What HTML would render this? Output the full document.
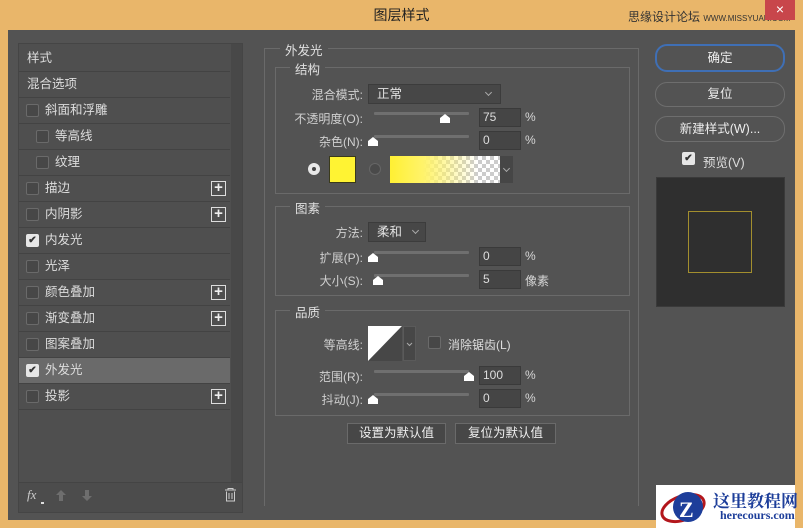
<!DOCTYPE html>
<html><head><meta charset="utf-8">
<style>
*{margin:0;padding:0;box-sizing:border-box}
body{width:803px;height:528px;background:#e9b66a;position:relative;overflow:hidden;font-family:"Liberation Sans","Noto Sans CJK SC",sans-serif;font-size:12px;color:#d6d6d6}
.a{position:absolute}
.win{left:8px;top:30px;width:787px;height:490px;background:#535353}
.title{left:0;top:0;width:803px;height:30px;text-align:center;line-height:30px;font-size:14px;color:#222}
.close{left:765px;top:0;width:30px;height:20px;background:#c8464b;color:#fff;text-align:center;line-height:18px;font-size:14px}
.lp{left:18px;top:43px;width:225px;height:470px;border:1px solid #454545;background:#4f4f4f}
.row{position:absolute;left:19px;width:211px;height:26px;border-bottom:1px solid #434343;line-height:25px;color:#ddd;font-size:12.5px}
.cb{position:absolute;width:13px;height:13px;border:1px solid #6a6a6a;background:#474747;border-radius:2px}
.cbk{background:#e6e6e6;border-color:#e6e6e6;color:#333;font-size:10px;line-height:11px;text-align:center;font-weight:bold}
.plus{position:absolute;left:192px;top:5px;width:15px;height:15px;border:1px solid #ddd;color:#eee;text-align:center;line-height:12px;font-size:15px;font-weight:bold}
.grp{position:absolute;border:1px solid #6a6a6a}
.lg{position:absolute;background:#535353;padding:0 5px;font-size:12.5px;color:#e0e0e0}
.lbl{position:absolute;text-align:right;width:120px;color:#d0d0d0;font-size:12px}
.inp{position:absolute;width:42px;height:19px;background:#454545;border:1px solid #3a3a3a;color:#ddd;padding-left:3px;line-height:17px;font-size:12px}
.trk{position:absolute;height:3px;background:#6f6f6f;width:95px;border-radius:1px}
.th{position:absolute;width:0;height:0}
.th:before{content:"";position:absolute;left:-5px;top:0;border-left:5px solid transparent;border-right:5px solid transparent;border-bottom:4px solid #fff}
.th:after{content:"";position:absolute;left:-5px;top:4px;width:10px;height:5px;background:#fff}
.sel{position:absolute;height:20px;background:#474747;border:1px solid #3c3c3c;color:#e0e0e0;padding-left:8px;line-height:18px;font-size:12.5px}
.chev{position:absolute;width:5px;height:5px;border-right:1px solid #aaa;border-bottom:1px solid #aaa;transform:rotate(45deg)}
.btn{position:absolute;border:1px solid #6e6e6e;border-radius:12px;text-align:center;color:#eee;font-size:12.5px}
.pb{position:absolute;height:21px;background:#474747;border:1px solid #6a6a6a;color:#eee;text-align:center;line-height:19px;font-size:12.5px}
</style></head><body>
<div class="a title">图层样式</div>
<div class="a" style="left:628px;top:8px;font-size:12px;color:#333;white-space:nowrap">思缘设计论坛 <span style="font-size:8px">WWW.MISSYUAN.COM</span></div>
<div class="a close">×</div>
<div class="a win"></div>

<div class="a lp"></div>
<div class="a" style="left:231px;top:44px;width:11px;height:438px;background:#484848"></div>
<div class="row" style="top:46px;padding-left:8px">样式</div>
<div class="row" style="top:72px;padding-left:8px">混合选项</div>
<div class="row" style="top:98px"><span class="cb" style="left:7px;top:6px"></span><span style="position:absolute;left:26px">斜面和浮雕</span></div>
<div class="row" style="top:124px"><span class="cb" style="left:17px;top:6px"></span><span style="position:absolute;left:36px">等高线</span></div>
<div class="row" style="top:150px"><span class="cb" style="left:17px;top:6px"></span><span style="position:absolute;left:36px">纹理</span></div>
<div class="row" style="top:176px"><span class="cb" style="left:7px;top:6px"></span><span style="position:absolute;left:26px">描边</span><span class="plus">+</span></div>
<div class="row" style="top:202px"><span class="cb" style="left:7px;top:6px"></span><span style="position:absolute;left:26px">内阴影</span><span class="plus">+</span></div>
<div class="row" style="top:228px"><span class="cb cbk" style="left:7px;top:6px">✔</span><span style="position:absolute;left:26px">内发光</span></div>
<div class="row" style="top:254px"><span class="cb" style="left:7px;top:6px"></span><span style="position:absolute;left:26px">光泽</span></div>
<div class="row" style="top:280px"><span class="cb" style="left:7px;top:6px"></span><span style="position:absolute;left:26px">颜色叠加</span><span class="plus">+</span></div>
<div class="row" style="top:306px"><span class="cb" style="left:7px;top:6px"></span><span style="position:absolute;left:26px">渐变叠加</span><span class="plus">+</span></div>
<div class="row" style="top:332px"><span class="cb" style="left:7px;top:6px"></span><span style="position:absolute;left:26px">图案叠加</span></div>
<div class="row" style="top:358px;background:#6a6a6a"><span class="cb cbk" style="left:7px;top:6px">✔</span><span style="position:absolute;left:26px">外发光</span></div>
<div class="row" style="top:384px"><span class="cb" style="left:7px;top:6px"></span><span style="position:absolute;left:26px">投影</span><span class="plus">+</span></div>
<div class="a" style="left:19px;top:482px;width:223px;height:30px;background:#4c4c4c;border-top:1px solid #444"></div>
<div class="a" style="left:27px;top:487px;font-style:italic;color:#ccc;font-size:13px;font-family:'Liberation Serif',serif">fx</div>
<div class="a" style="left:41px;top:502px;width:3px;height:2px;background:#ddd"></div>
<svg class="a" style="left:55px;top:490px" width="12" height="12"><path d="M6 0L11 5H8V11H4V5H1Z" fill="#6e6e6e"/></svg>
<svg class="a" style="left:81px;top:490px" width="12" height="12"><path d="M6 11L11 6H8V0H4V6H1Z" fill="#6e6e6e"/></svg>
<svg class="a" style="left:224px;top:488px" width="13" height="14"><path d="M1 2h11M4 2V0.5h5V2M2.5 3.5v9.5h8V3.5M5 5v6M8 5v6" stroke="#ccc" fill="none"/></svg>

<!-- center -->
<div class="grp" style="left:264px;top:48px;width:375px;height:458px;border-bottom:none"></div>
<div class="lg" style="left:280px;top:40px">外发光</div>
<div class="grp" style="left:275px;top:67px;width:355px;height:127px"></div>
<div class="lg" style="left:290px;top:59px">结构</div>
<div class="lbl" style="left:243px;top:86px">混合模式:</div>
<div class="sel" style="left:368px;top:84px;width:133px">正常<span class="chev" style="left:117px;top:5px"></span></div>
<div class="lbl" style="left:243px;top:110px">不透明度(O):</div>
<div class="trk" style="left:374px;top:112px"></div><div class="th" style="left:445px;top:114px"></div>
<div class="inp" style="left:479px;top:108px">75</div><div class="a" style="left:525px;top:110px">%</div>
<div class="lbl" style="left:243px;top:133px">杂色(N):</div>
<div class="trk" style="left:374px;top:135px"></div><div class="th" style="left:373px;top:137px"></div>
<div class="inp" style="left:479px;top:131px">0</div><div class="a" style="left:525px;top:133px">%</div>
<div class="a" style="left:308px;top:163px;width:12px;height:12px;border-radius:50%;background:#e8e8e8"></div>
<div class="a" style="left:312px;top:167px;width:4px;height:4px;border-radius:50%;background:#444"></div>
<div class="a" style="left:329px;top:156px;width:27px;height:27px;background:#fff333;border:1px solid #3a3a1a"></div>
<div class="a" style="left:369px;top:163px;width:12px;height:12px;border-radius:50%;border:1px solid #666;background:#4a4a4a"></div>
<div class="a" style="left:390px;top:156px;width:110px;height:27px;background:linear-gradient(90deg,#fff033 0%,#fff36a 30%,rgba(255,255,255,0) 80%),repeating-conic-gradient(#ccc 0 25%,#fff 0 50%) 0 0/8px 8px"></div>
<div class="a" style="left:500px;top:156px;width:13px;height:27px;background:#464646"><span class="chev" style="left:4px;top:10px"></span></div>

<div class="grp" style="left:275px;top:206px;width:355px;height:90px"></div>
<div class="lg" style="left:290px;top:198px">图素</div>
<div class="lbl" style="left:243px;top:224px">方法:</div>
<div class="sel" style="left:368px;top:222px;width:58px">柔和<span class="chev" style="left:44px;top:5px"></span></div>
<div class="lbl" style="left:243px;top:249px">扩展(P):</div>
<div class="trk" style="left:374px;top:251px"></div><div class="th" style="left:373px;top:253px"></div>
<div class="inp" style="left:479px;top:247px">0</div><div class="a" style="left:525px;top:249px">%</div>
<div class="lbl" style="left:243px;top:272px">大小(S):</div>
<div class="trk" style="left:374px;top:274px"></div><div class="th" style="left:378px;top:276px"></div>
<div class="inp" style="left:479px;top:270px">5</div><div class="a" style="left:525px;top:272px">像素</div>

<div class="grp" style="left:275px;top:310px;width:355px;height:106px"></div>
<div class="lg" style="left:290px;top:302px">品质</div>
<div class="lbl" style="left:243px;top:336px">等高线:</div>
<svg class="a" style="left:368px;top:326px" width="48" height="36"><rect x="0" y="0" width="34" height="35" fill="#fff"/><path d="M0 35L34 0V35Z" fill="#474747"/><rect x="35.5" y="0.5" width="12" height="34" fill="#474747" stroke="#5a5a5a"/><path d="M39 17l2.5 2.5L44 17" stroke="#aaa" fill="none"/></svg>
<div class="cb" style="left:428px;top:336px;width:13px;height:13px"></div>
<div class="a" style="left:448px;top:336px;color:#ddd">消除锯齿(L)</div>
<div class="lbl" style="left:243px;top:368px">范围(R):</div>
<div class="trk" style="left:374px;top:370px"></div><div class="th" style="left:469px;top:372px"></div>
<div class="inp" style="left:479px;top:366px">100</div><div class="a" style="left:525px;top:368px">%</div>
<div class="lbl" style="left:243px;top:391px">抖动(J):</div>
<div class="trk" style="left:374px;top:393px"></div><div class="th" style="left:373px;top:395px"></div>
<div class="inp" style="left:479px;top:389px">0</div><div class="a" style="left:525px;top:391px">%</div>
<div class="pb" style="left:347px;top:423px;width:99px">设置为默认值</div>
<div class="pb" style="left:455px;top:423px;width:101px">复位为默认值</div>

<!-- right -->
<div class="btn" style="left:655px;top:44px;width:130px;height:28px;line-height:24px;border:2px solid #3f6fb5">确定</div>
<div class="btn" style="left:655px;top:82px;width:130px;height:25px;line-height:23px">复位</div>
<div class="btn" style="left:655px;top:116px;width:130px;height:26px;line-height:24px">新建样式(W)...</div>
<div class="cb cbk" style="left:682px;top:152px">✔</div>
<div class="a" style="left:703px;top:152px;color:#ddd;font-size:12.5px">预览(V)</div>
<div class="a" style="left:656px;top:177px;width:129px;height:130px;background:#2f2f2f;border:1px solid #3a3a3a"></div>
<div class="a" style="left:688px;top:211px;width:64px;height:62px;border:1px solid #a38f2e"></div>

<!-- logo -->
<div class="a" style="left:656px;top:485px;width:139px;height:43px;background:#fff"></div>
<svg class="a" style="left:658px;top:487px" width="50" height="40"><ellipse cx="25" cy="21" rx="22" ry="12" fill="none" stroke="#b3161c" stroke-width="3" transform="rotate(-20 25 21)"/><circle cx="30" cy="20" r="15" fill="#1d3e9a"/><text x="21" y="30" font-size="22" font-weight="bold" fill="#fff" font-family="Liberation Serif">Z</text></svg>
<div class="a" style="left:713px;top:487px;color:#1d3e9a;font-size:17px;font-weight:bold;font-family:'Liberation Serif','Noto Serif CJK SC',serif">这里教程网</div>
<div class="a" style="left:720px;top:508px;color:#1d3e9a;font-size:12px;font-weight:bold;font-family:'Liberation Serif',serif">herecours.com</div>
</body></html>
